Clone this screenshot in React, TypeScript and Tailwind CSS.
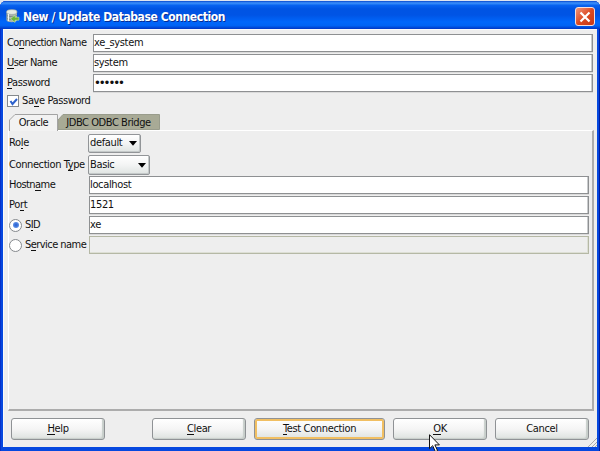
import type { ReactNode } from "react";

function Mnemonic({ text, at }: { text: string; at: number }) {
  if (at < 0) return <>{text}</>;
  return (
    <>
      {text.slice(0, at)}
      <span className="bg-[linear-gradient(#111,#111)] bg-[length:100%_1px] bg-[position:0_12px] bg-no-repeat pb-px">{text[at]}</span>
      {text.slice(at + 1)}
    </>
  );
}

function Label({ text, at = -1, className = "" }: { text: string; at?: number; className?: string }) {
  return (
    <span className={`shrink-0 leading-[12px] whitespace-nowrap ${className}`}>
      <Mnemonic text={text} at={at} />
    </span>
  );
}

function Field({ value, disabled = false }: { value: string; disabled?: boolean }) {
  return (
    <div
      className={`flex h-[18px] flex-1 items-center border leading-[12px] tracking-[-0.35px] ${
        disabled
          ? "border-[#b5b8a5] bg-[#eeeeee] shadow-[inset_-1px_-1px_#dddfd5]"
          : "border-[#8e9092] bg-white shadow-[inset_-1px_0_#c9cbcd,0_1px_#dadada]"
      }`}
    >
      {value}
    </div>
  );
}

function Select({ value, className }: { value: string; className: string }) {
  return (
    <div
      className={`flex items-center justify-between rounded-[2px] border border-[#929598] bg-linear-to-b from-white via-[#f3f4f4] to-[#dfe4e2] pr-[3px] pl-px shadow-[inset_-1px_-1px_#c4c9c9] ${className}`}
    >
      <span className="leading-[12px] tracking-[-0.35px]">{value}</span>
      <svg width="8" height="5" viewBox="0 0 8 5"><path d="M0 0h8L4 4.7z" fill="#000" /></svg>
    </div>
  );
}

function Radio({ on = false }: { on?: boolean }) {
  return (
    <span className="flex h-[13px] w-[13px] shrink-0 items-center justify-center rounded-full border border-[#85898d] bg-white">
      {on && <span className="h-[6px] w-[6px] rounded-full bg-radial from-[#235bd0] to-[#77a5ee]" />}
    </span>
  );
}

function Button({ children, className, focus = false }: { children: ReactNode; className: string; focus?: boolean }) {
  return (
    <button
      className={`flex h-[22px] items-center justify-center rounded-[3px] border border-[#8f9295] bg-linear-to-b from-white via-[#f5f5f5] to-[#dde2df] pb-px leading-[12px] tracking-[-0.35px] ${
        focus ? "shadow-[inset_0_0_0_2px_#f1bf62]" : "shadow-[inset_-2px_-1px_1px_#c7ceca]"
      } ${className}`}
    >
      <span>{children}</span>
    </button>
  );
}

function DatabaseIcon() {
  return (
    <svg className="mt-[3px]" width="14" height="15" viewBox="0 0 14 15">
      <path d="M.5 3v8c0 3 10.5 3 10.5 0V3z" fill="#a9b4ae" />
      <ellipse cx="5.8" cy="3" rx="5.3" ry="2.4" fill="#e6ebe3" stroke="#8d9b9a" strokeWidth=".6" />
      <path d="M.5 6c1 2 9.500 2 10.500 0M.5 9c1 2 9.500 2 10.500 0" fill="none" stroke="#7c8889" />
      <path d="M2.500 5v7" stroke="#f2f5f0" />
      <path d="M13 8.200H9V6L4.500 9.800 9 13.500v-2.300h4z" fill="#69b53a" stroke="#d6edbb" strokeWidth=".5" />
    </svg>
  );
}

export default function App() {
  return (
    <div className="relative flex h-[451px] w-[600px] flex-col overflow-hidden bg-[#dfe5ef] pt-px font-['DejaVu_Sans_Condensed','DejaVu_Sans',sans-serif] text-[11px] tracking-[-0.55px] text-[#111]">
      <div className="flex h-[450px] flex-col rounded-t-[6px] bg-[#0648df] shadow-[inset_1px_0_#0831c9,inset_-1px_0_#001da0]">
        <header className="flex h-[28px] shrink-0 items-center rounded-t-[6px] bg-[linear-gradient(#0647cd_0%,#3c91fb_7%,#0762ef_16%,#0054e3_28%,#0054e5_50%,#0067fb_75%,#0063f4_88%,#0036c3_100%)] pr-[5px] pl-[6px]">
          <DatabaseIcon />
          <h1 className="ml-[3px] flex-1 pt-[4px] text-[12px] leading-[16px] font-bold tracking-[-0.41px] whitespace-nowrap text-white [text-shadow:1px_1px_#062c93]">
            New / Update Database Connection
          </h1>
          <button className="mt-[3px] flex h-[19px] w-[20px] items-center justify-center rounded-[3px] border border-[#f5dedb] bg-linear-to-br from-[#f09477] via-[#dc4a22] to-[#c63715]">
            <svg width="12" height="12" viewBox="0 0 12 12"><path d="m1.5 1.5 9 9m0-9-9 9" stroke="#fff" strokeWidth="2.2" /></svg>
          </button>
        </header>

        <main className="mr-[3px] mb-[4px] ml-[3px] flex flex-1 flex-col border-t border-l border-[#fafafa] bg-[#eeeeee]">
          <section className="mt-[4px] mr-[4px] ml-[3px] flex flex-col gap-[2px]">
            <div className="flex items-center">
              <Label text="Connection Name" at={2} className="w-[86px] tracking-[-0.6px]" />
              <Field value="xe_system" />
            </div>
            <div className="flex items-center">
              <Label text="User Name" at={0} className="w-[86px]" />
              <Field value="system" />
            </div>
            <div className="flex items-center">
              <Label text="Password" at={0} className="w-[86px] tracking-[-0.4px]" />
              <div className="flex h-[18px] flex-1 items-center border border-[#8e9092] bg-white text-[13px] leading-[12px] tracking-[-2.1px] shadow-[inset_-1px_0_#c9cbcd,0_1px_#dadada]">
                ••••••
              </div>
            </div>
            <div className="flex h-[14px] items-center gap-[3px]">
              <span className="flex h-[12px] w-[12px] items-center justify-center border border-[#85898d] bg-white">
                <svg width="9" height="9" viewBox="0 0 9 9"><path d="m1.5 4 2 3L8 2" fill="none" stroke="#2d62cc" strokeWidth="2" /></svg>
              </span>
              <Label text="Save Password" at={2} className="tracking-[-0.4px]" />
            </div>
          </section>

          <nav className="mt-[6px] ml-[5px] flex h-[16px] tracking-[-0.45px]">
            <div className="relative flex w-[49px] items-center justify-center pt-px">
              <svg className="absolute inset-0" width="49" height="17" viewBox="0 0 49 17"><path d="M.5 17V6L6 .5h42.5V17" fill="#f2f2f2" stroke="#a3a3a3" /></svg>
              <span className="relative leading-[12px]">Oracle</span>
            </div>
            <div className="relative flex w-[102px] items-center justify-center pt-px pr-px">
              <svg className="absolute inset-0" width="102" height="16" viewBox="0 0 102 16"><path d="M0 15.5V6L5 .5h96.5v15z" fill="#a8aa96" stroke="#999c8c" /></svg>
              <span className="relative leading-[12px] whitespace-nowrap">JDBC ODBC Bridge</span>
            </div>
          </nav>

          <section className="mr-[3px] ml-[4px] flex h-[281px] flex-col border-t border-r-2 border-b-2 border-l border-t-white border-r-[#acacac] border-b-[#acacac] border-l-white pr-[3px]">
            <div className="mt-[2px] flex h-[20px] items-center">
              <Label text="Role" at={2} className="w-[79px] tracking-[-0.3px]" />
              <Select value="default" className="h-[19px] w-[53px]" />
            </div>
            <div className="mt-[2px] flex h-[20px] items-center">
              <Label text="Connection Type" at={12} className="w-[79px] tracking-[-0.4px]" />
              <Select value="Basic" className="h-[20px] w-[62px]" />
            </div>
            <div className="mt-px flex items-center">
              <Label text="Hostname" at={5} className="w-[80px]" />
              <Field value="localhost" />
            </div>
            <div className="mt-[2px] flex items-center">
              <Label text="Port" at={2} className="w-[80px] tracking-[-0.3px]" />
              <Field value="1521" />
            </div>
            <div className="mt-[2px] flex items-center">
              <div className="flex w-[80px] items-center gap-[3px]"><Radio on /><Label text="SID" at={1} /></div>
              <Field value="xe" />
            </div>
            <div className="mt-[2px] flex items-center">
              <div className="flex w-[80px] items-center gap-[3px]"><Radio /><Label text="Service name" at={1} /></div>
              <Field value="" disabled />
            </div>
          </section>

          <footer className="mt-[7px] ml-[7px] flex">
            <Button className="w-[94px]"><Mnemonic text="Help" at={0} /></Button>
            <Button className="ml-[47px] w-[94px]"><Mnemonic text="Clear" at={0} /></Button>
            <Button className="ml-[8px] w-[131px]" focus><Mnemonic text="Test Connection" at={0} /></Button>
            <Button className="ml-[8px] w-[94px]"><Mnemonic text="OK" at={0} /></Button>
            <Button className="ml-[8px] w-[94px]">Cancel</Button>
          </footer>
        </main>
      </div>

      <svg className="absolute right-[3px] bottom-[4px]" width="9" height="9" viewBox="0 0 9 9"><path d="M0 9 9 0M4 9l5-5M7 9l2-2" stroke="#aaa" /></svg>
      <svg className="absolute top-[434px] left-[429px]" width="12" height="19" viewBox="0 0 12 19">
        <path d="M.5.7v14l3.2-3 2.7 6 2.2-1-2.7-5.8h4.5z" fill="#fff" stroke="#111" />
      </svg>
    </div>
  );
}
